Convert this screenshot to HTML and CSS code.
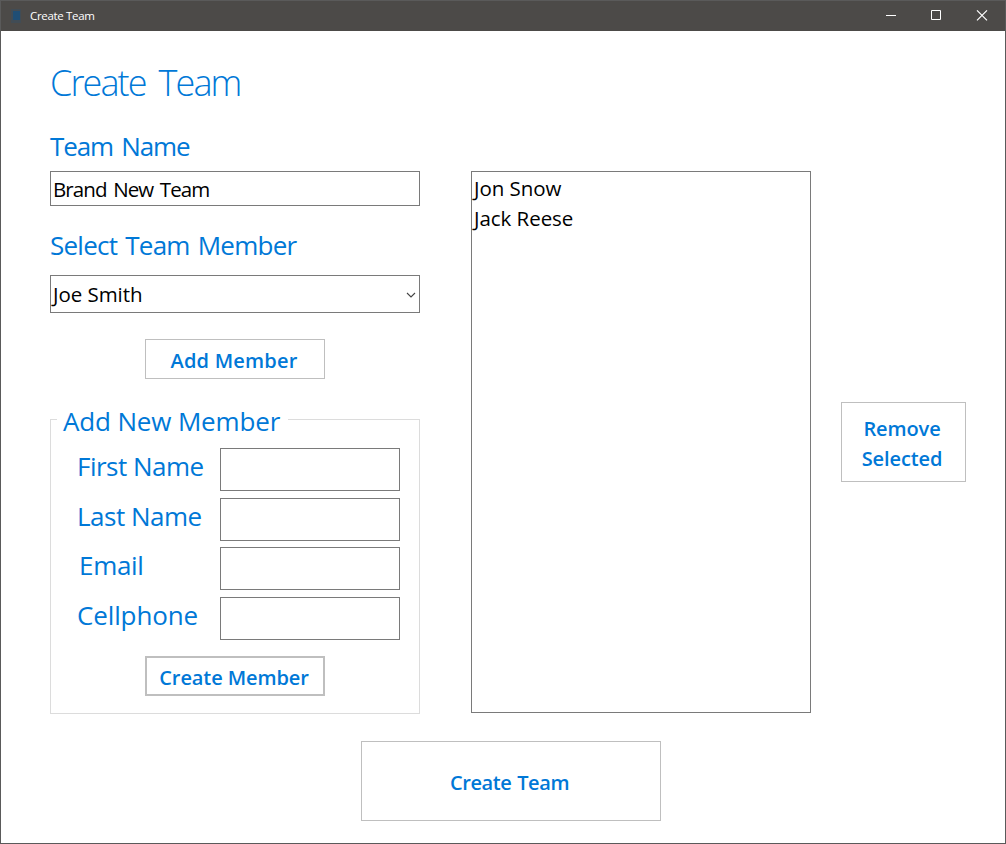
FILE: index.html
```html
<!DOCTYPE html>
<html lang="en">
<head>
<meta charset="utf-8">
<title>Create Team</title>
<link rel="stylesheet" href="styles.css">
</head>
<body>
<div class="window">
  <header class="titlebar">
    <svg class="app-icon" width="12" height="14" viewBox="0 0 12 14"><path d="M1 0h10v14H1z" fill="#414c55"/><path d="M3 2h7v9H3z" fill="#1f4e75"/></svg>
    <span class="caption">Create Team</span>
    <svg class="controls" width="138" height="30" viewBox="0 0 138 30" fill="none" stroke="#fff" stroke-width="1">
      <path d="M19 14.500h10"/><path d="M64.500 9.500h9v9h-9z"/><path stroke-width="1.200" d="M110 9.300l10 10M120 9.300l-10 10"/>
    </svg>
  </header>
  <main class="content">
    <h1 class="title">Create Team</h1>
    <div class="columns">
      <div class="form">
        <label class="label name-label" for="team">Team Name</label>
        <input class="field team-field" id="team" value="Brand New Team">
        <div class="label select-label">Select Team Member</div>
        <div class="field select"><span class="selected">Joe Smith</span>
          <svg class="chevron" width="10" height="6" viewBox="0 0 10 6" fill="none" stroke="#444" stroke-width="1.100"><path d="M1 1l4 4 4-4"/></svg>
        </div>
        <button class="button add">Add Member</button>
        <section class="group">
          <h2 class="label legend"><span class="legend-text">Add New Member</span></h2>
          <div class="row"><label class="label first" for="first">First Name</label><input class="field box" id="first"></div>
          <div class="row"><label class="label last" for="last">Last Name</label><input class="field box" id="last"></div>
          <div class="row"><label class="label email" for="email">Email</label><input class="field box" id="email"></div>
          <div class="row"><label class="label cell" for="cell">Cellphone</label><input class="field box" id="cell"></div>
          <button class="button create-member">Create Member</button>
        </section>
      </div>
      <ul class="field list"><li>Jon Snow</li><li>Jack Reese</li></ul>
      <button class="button remove">Remove<br>Selected</button>
    </div>
    <button class="button create-team">Create Team</button>
  </main>
</div>
</body>
</html>
```
FILE: styles.css
```css
* { box-sizing: border-box; }
body { margin: 0; font-family: "Open Sans", "Noto Sans", sans-serif; }
.window { width: 1006px; height: 844px; border: 1px solid #5a5a5a; background: #fff; overflow: hidden; }
.titlebar { display: flex; align-items: center; height: 30px; padding-left: 9px; background: #4c4a48; }
.caption { margin-left: 8px; color: #fff; font-size: 11.5px; line-height: 30px; letter-spacing: -0.33px; }
.controls { margin-left: auto; }
.content { padding: 27px 0 0 49px; }
.title { margin: 0; height: 70px; color: #0078d7; font-size: 36px; font-weight: 300; line-height: 50px; letter-spacing: -1.9px; word-spacing: 5.5px; }
.label { display: block; margin: 0; height: 36px; color: #0078d7; font-size: 26px; font-weight: 400; line-height: 36px; white-space: nowrap; letter-spacing: -0.3px; }
.name-label { letter-spacing: -1.1px; word-spacing: 2.5px; }
.field { margin: 0; border: 1px solid #7a7a7a; border-radius: 0; background: #fff; color: #000; font: 400 20.5px "Open Sans", "Noto Sans", sans-serif; letter-spacing: -0.05px; }
.columns { display: flex; align-items: flex-start; height: 586px; }
.form { width: 370px; }
.team-field { display: block; width: 370px; height: 35px; margin-top: 7px; padding: 1px 2px 0; letter-spacing: -0.88px; word-spacing: 2px; }
.select-label { margin-top: 21px; letter-spacing: -0.75px; word-spacing: 2px; }
.select { display: flex; align-items: center; justify-content: space-between; width: 370px; height: 38px; margin-top: 12px; padding: 0 3px 0 2px; }
.chevron { margin-top: 1px; }
.button { display: block; padding: 4px 2px 0 0; border: 1px solid #bfbfbf; border-radius: 0; background: #fff; color: #0078d7; font: 600 20px/30px "Open Sans", "Noto Sans", sans-serif; }
.add { width: 180px; height: 40px; margin: 26px 0 0 95px; letter-spacing: 0.2px; }
.group { height: 295px; margin-top: 40px; border: 1px solid #dcdcdc; }
.legend { margin: -17px 0 9px 6px; letter-spacing: -0.15px; }
.legend-text { display: inline-block; width: 231px; padding-left: 6px; background: #fff; }
.row { display: flex; height: 43px; margin: 0 19px 7px 26px; }
.row .label { width: 143px; }
.row .first { letter-spacing: -0.5px; }
.row .last { letter-spacing: -0.5px; }
.row .email { padding-left: 2px; }
.row .cell { letter-spacing: -0.12px; }
.row:nth-of-type(2) { margin-bottom: 6px; }
.box { width: 180px; height: 43px; }
.create-member { width: 180px; height: 40px; margin: 16px 0 0 94px; border-width: 2px; letter-spacing: -0.1px; }
.list { width: 340px; height: 542px; margin: 43px 0 0 51px; padding: 1px 2px; line-height: 30px; list-style: none; }
.remove { width: 125px; height: 80px; margin: 274px 0 0 30px; padding-right: 3px; letter-spacing: -0.1px; }
.create-team { width: 300px; height: 80px; margin: 27px 0 0 311px; padding-right: 3px; letter-spacing: -0.4px; word-spacing: 1px; }
```
